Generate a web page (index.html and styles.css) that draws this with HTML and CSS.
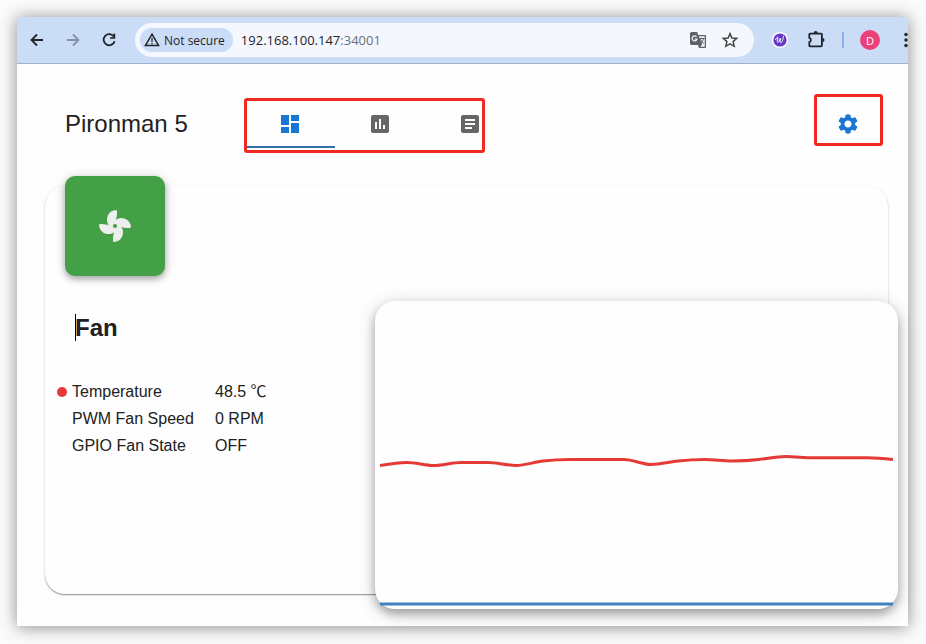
FILE: index.html
```html
<!DOCTYPE html>
<html lang="en">
<head>
<meta charset="utf-8">
<title>Pironman 5</title>
<link rel="stylesheet" href="styles.css">
</head>
<body>
<div class="window">
  <div class="toolbar">
    <button class="tool" aria-label="Back"><svg viewBox="0 0 16 16"><path d="M14 8H2.500M8 2.500 2.500 8 8 13.500" fill="none" stroke="currentColor" stroke-width="1.800"/></svg></button>
    <button class="tool tool-muted" aria-label="Forward"><svg viewBox="0 0 16 16"><path d="M2 8h11.500M8 2.500 13.500 8 8 13.500" fill="none" stroke="currentColor" stroke-width="1.800"/></svg></button>
    <button class="tool" aria-label="Reload"><svg viewBox="0 0 16 16"><path d="M13 4.800A5.600 5.600 0 1 0 13.600 9.300" fill="none" stroke="currentColor" stroke-width="1.800"/><path d="M14.200 1.500v5.300H9V5.200h3.500V1.500z" fill="currentColor"/></svg></button>
    <div class="omnibox">
      <button class="chip"><svg viewBox="0 0 16 16"><path d="M8 2.200 14.600 13.500H1.400z" fill="none" stroke="currentColor" stroke-width="1.500"/><path d="M8 6v3.800M8 10.800v1.400" stroke="currentColor" stroke-width="1.300"/></svg><span>Not secure</span></button>
      <div class="address" role="textbox" aria-label="Address">192.168.100.147<span class="port">:34001</span></div>
      <button class="action" aria-label="Translate"><svg viewBox="0 0 18 18"><path d="M2.500 1h5.700l1 3H16q1 0 1 1v11q0 1-1 1h-6l-1-3H2.500q-1.500 0-1.500-1.500v-10Q1 1 2.500 1z" fill="#5f6368"/><path d="M9.800 5.200h5.900v10.600h-4.500l2-2.200z" fill="#f4f8fe"/><path d="M7.500 5.700A2.500 2.500 0 1 0 8 8H5.700" fill="none" stroke="#f4f8fe" stroke-width="1.200"/><path d="M10.500 7.500h5M12.800 6.500v1M11.300 8q.7 2.700 3.700 4.600M14.600 8q-.8 2.700-2.800 4" fill="none" stroke="#5f6368" stroke-width="1"/></svg></button>
      <button class="action" aria-label="Bookmark"><svg viewBox="0 0 18 18"><path d="m9 2.600 1.900 4.400 4.800.4-3.600 3.200 1.100 4.700L9 12.800l-4.200 2.500 1.100-4.700-3.600-3.200 4.800-.4z" fill="none" stroke="#474747" stroke-width="1.500"/></svg></button>
    </div>
    <button class="extension" aria-label="Extension"><svg viewBox="0 0 16 16"><circle cx="8" cy="8" r="8" fill="#fff"/><circle cx="8" cy="8" r="6.600" fill="#6538c8"/><path d="M3.500 8C5 4 6.500 4.500 5.500 8 4.500 11.500 6.800 11 8.500 6 7 11.500 9.500 12 10.500 8.500 11.300 6 11.500 4.800 11.500 3.800" fill="none" stroke="#fff" stroke-width="1"/></svg></button>
    <button class="puzzle" aria-label="Extensions"><svg viewBox="0 0 20 20"><path d="M3.200 3.600H14q.9 0 .9.900V15.500q0 .9-.9.900H3.200q-.9 0-.9-.9v-3.300a2.300 2.300 0 0 0 0-4.400V4.500q0-.9.900-.9z" fill="none" stroke="#1f2328" stroke-width="1.800"/><path d="M6.700 3a2 2 0 0 1 4 0zM15.500 8a2 2 0 0 1 0 4z" fill="#1f2328"/></svg></button>
    <span class="divider"></span>
    <button class="avatar" aria-label="Profile">D</button>
    <button class="kebab" aria-label="Menu"><svg viewBox="0 0 24 24"><g fill="#1f2328"><circle cx="12" cy="6.500" r="1.700"/><circle cx="12" cy="12" r="1.700"/><circle cx="12" cy="17.500" r="1.700"/></g></svg></button>
  </div>

  <main class="page">
    <header class="header">
      <h1 class="title">Pironman 5</h1>
      <nav class="tabs">
        <button class="tab tab-active" aria-label="Dashboard"><svg viewBox="0 0 24 24"><path d="M3 13h8V3H3zm0 8h8v-6H3zm10 0h8V11h-8zm0-18v6h8V3z"/></svg></button>
        <button class="tab" aria-label="History"><svg viewBox="0 0 24 24"><path d="M19 3H5c-1.100 0-2 .9-2 2v14c0 1.100.9 2 2 2h14c1.100 0 2-.9 2-2V5c0-1.100-.9-2-2-2M9 17H7v-7h2zm4 0h-2V7h2zm4 0h-2v-4h2z"/></svg></button>
        <button class="tab" aria-label="Log"><svg viewBox="0 0 24 24"><path d="M19 3H5c-1.100 0-2 .9-2 2v14c0 1.100.9 2 2 2h14c1.100 0 2-.9 2-2V5c0-1.100-.9-2-2-2m-5 14H7v-2h7zm3-4H7v-2h10zm0-4H7V7h10z"/></svg></button>
      </nav>
      <button class="settings" aria-label="Settings"><svg viewBox="0 0 24 24"><path d="M19.140 12.940c.04-.3.060-.61.060-.94 0-.32-.02-.64-.07-.94l2.030-1.580c.18-.14.23-.41.120-.61l-1.920-3.320c-.12-.22-.37-.29-.59-.22l-2.390.96c-.5-.38-1.030-.7-1.620-.94l-.36-2.540c-.04-.24-.24-.41-.48-.41h-3.840c-.24 0-.43.170-.47.410l-.36 2.540c-.59.240-1.130.570-1.620.940l-2.390-.96c-.22-.08-.47 0-.59.220L2.740 8.870c-.12.210-.08.470.120.610l2.030 1.580c-.05.3-.09.630-.09.940s.02.640.070.940l-2.030 1.580c-.18.140-.23.410-.12.610l1.920 3.320c.12.220.37.290.59.220l2.390-.96c.5.380 1.030.7 1.620.940l.36 2.540c.05.240.24.410.48.410h3.840c.24 0 .44-.17.470-.41l.36-2.540c.59-.24 1.130-.56 1.620-.94l2.390.96c.22.080.47 0 .59-.22l1.920-3.320c.12-.22.070-.47-.12-.61zM12 15.600c-1.980 0-3.600-1.620-3.600-3.600s1.620-3.600 3.600-3.600 3.600 1.620 3.600 3.600-1.620 3.600-3.600 3.600"/></svg></button>
    </header>

    <section class="card">
      <div class="info">
        <div class="tile"><svg viewBox="0 0 34 34"><g fill="#eee"><path d="M17.800 1C11.500 1.500 7.500 7.500 9.500 14l3 4h5l.8-5.500C17.800 9.500 19.500 6 19 2q-.2-1-1.200-1z"/><path d="M17.800 1C11.500 1.500 7.500 7.500 9.500 14l3 4h5l.8-5.500C17.800 9.500 19.500 6 19 2q-.2-1-1.200-1z" transform="rotate(90 17 17)"/><path d="M17.800 1C11.500 1.500 7.500 7.500 9.500 14l3 4h5l.8-5.500C17.800 9.500 19.500 6 19 2q-.2-1-1.200-1z" transform="rotate(180 17 17)"/><path d="M17.800 1C11.500 1.500 7.500 7.500 9.500 14l3 4h5l.8-5.500C17.800 9.500 19.500 6 19 2q-.2-1-1.200-1z" transform="rotate(270 17 17)"/></g><circle cx="17" cy="17" r="2.100" fill="#43a047"/></svg></div>
        <h2 class="name">Fan</h2>
        <table class="stats">
          <tr><td class="mark"><span class="dot"></span></td><th scope="row">Temperature</th><td>48.5 ℃</td></tr>
          <tr><td class="mark"></td><th scope="row">PWM Fan Speed</th><td>0 RPM</td></tr>
          <tr><td class="mark"></td><th scope="row">GPIO Fan State</th><td>OFF</td></tr>
        </table>
      </div>
      <div class="chart">
        <svg viewBox="0 0 513 308" preserveAspectRatio="none" role="img" aria-label="Temperature and fan speed">
          <path d="M0 164.500C9 163 18 161.500 27 161.500S45 164.500 54 164.500 72 161.500 81 161.500H108C117 161.500 127 164.500 136 164.500S154 161 163 160 181 158.500 190 158.500H244C253 158.500 262 163.500 271 163.500 280 163.500 289 161 298 160S316 158.500 325 158.500 343 160 352 160 370 159.500 379 158.500 397 155.500 406 155.500 424 156.800 433 156.800H487C496 156.800 504 157.500 513 158.500" fill="none" stroke="#e53935" stroke-width="3"/>
          <path d="M0 303H513" stroke="#3d82bd" stroke-width="3"/>
        </svg>
      </div>
    </section>
  </main>
</div>
</body>
</html>
```
FILE: styles.css
```css
* { box-sizing: border-box; }

body {
  margin: 0;
  padding: 17px 18px 18px 17px;
  background: #fbfbfb;
  color: #212121;
  font-family: "Liberation Sans", "Noto Sans CJK SC", sans-serif;
}

button {
  display: flex;
  align-items: center;
  justify-content: center;
  flex-shrink: 0;
  padding: 0;
  border: 0;
  background: none;
  color: inherit;
  font: inherit;
}

svg { display: block; }

.window {
  background: #fefefe;
  box-shadow: 0 1px 16px rgba(0, 0, 0, 0.45);
}

.toolbar {
  display: flex;
  align-items: center;
  height: 47px;
  padding-left: 12px;
  overflow: hidden;
  border-bottom: 1px solid #9fb1cd;
  background: #cbdcf6;
  color: #1f2328;
  font-family: "Open Sans", "Noto Sans", sans-serif;
}

.tool { width: 16px; height: 16px; margin-right: 20px; }
.tool svg { width: 16px; height: 16px; }
.tool-muted { color: #8090a8; }

.omnibox {
  display: flex;
  flex: 1;
  align-items: center;
  gap: 14px;
  height: 34px;
  margin-left: -2px;
  padding: 0 15px 0 5px;
  border-radius: 17px;
  background: #f4f8fe;
}

.chip {
  gap: 4px;
  height: 24px;
  margin-right: -6px;
  padding: 0 8px 0 4px;
  border-radius: 12px;
  background: #cbdcf6;
  font-size: 12px;
  font-weight: 500;
}

.chip svg { width: 16px; height: 16px; }

.address { flex: 1; font-size: 13px; white-space: nowrap; }
.port { color: #6b7075; }

.action { width: 18px; height: 18px; }
.action svg { width: 18px; height: 18px; }

.extension { width: 16px; height: 16px; margin-left: 18px; }
.extension svg { width: 16px; height: 16px; }

.puzzle { width: 20px; height: 20px; margin-left: 19px; }
.puzzle svg { width: 20px; height: 20px; }

.divider {
  flex-shrink: 0;
  width: 2px;
  height: 16px;
  margin-left: 15px;
  background: #8fb2e6;
}

.avatar {
  width: 20px;
  height: 20px;
  margin-left: 16px;
  border-radius: 50%;
  background: #ec407a;
  color: #fff;
  font-size: 11px;
}

.kebab { width: 24px; height: 24px; margin: 0 -10px 0 14px; }
.kebab svg { width: 24px; height: 24px; }

.page { padding: 36px 20px 32px 28px; }

.header {
  display: flex;
  align-items: center;
  height: 48px;
  margin-bottom: 38px;
  padding: 0 28px 0 20px;
}

.title {
  width: 180px;
  margin: 0;
  font-size: 24px;
  font-weight: 400;
  line-height: 32px;
}

.tabs { display: flex; position: relative; width: 236px; margin-right: auto; }

.tab {
  width: 90px;
  height: 48px;
  border-bottom: 2px solid transparent;
  border-top: 2px solid transparent;
  color: #666;
}

.tab-active { border-bottom-color: #3571a8; color: #1976d2; }

.tab svg,
.settings svg { width: 24px; height: 24px; fill: currentColor; }

.settings { position: relative; width: 24px; height: 24px; color: #1976d2; }

.tabs::after,
.settings::after {
  content: "";
  position: absolute;
  border: 3px solid #ee2a22;
  border-radius: 3px;
  pointer-events: none;
}

.tabs::after { inset: -2px -4px -5px -1px; }
.settings::after { inset: -18px -23px -10px -22px; }

.card {
  display: grid;
  grid-template-columns: 330px 1fr;
  border-radius: 20px;
  background: #fefefe;
  box-shadow: 0 1px 1px rgba(0, 0, 0, 0.36), 0 1px 3px rgba(0, 0, 0, 0.12);
}

.info { padding-left: 12px; }

.tile {
  display: flex;
  align-items: center;
  justify-content: center;
  width: 100px;
  height: 100px;
  margin: -10px 0 36px 8px;
  border-radius: 10px;
  background: #43a047;
  box-shadow: 0 3px 6px rgba(0, 0, 0, 0.3), 0 1px 14px rgba(0, 0, 0, 0.12);
}

.tile svg { width: 34px; height: 34px; }

.name {
  position: relative;
  margin: 0 0 34px;
  padding-left: 18px;
  font-size: 24px;
  line-height: 32px;
}

.name::before {
  content: "";
  position: absolute;
  top: 2px;
  left: 18px;
  width: 1px;
  height: 27px;
  background: #000;
}

.stats { border-collapse: collapse; font-size: 16px; line-height: 27px; }

.stats tr { height: 27px; }

.stats th,
.stats td { height: 27px; padding: 0; font-weight: 400; text-align: left; }

.stats th { width: 143px; }
.stats .mark { width: 15px; }

.dot {
  display: block;
  width: 10px;
  height: 10px;
  border-radius: 50%;
  background: #e53935;
}

.chart {
  height: 308px;
  margin: 115px -10px -15px 0;
  padding: 0 5px;
  border-radius: 20px;
  background: #fefefe;
  box-shadow: 0 5px 8px rgba(0, 0, 0, 0.24), 0 4px 18px rgba(0, 0, 0, 0.22);
}

.chart svg { width: 100%; height: 308px; }
```
